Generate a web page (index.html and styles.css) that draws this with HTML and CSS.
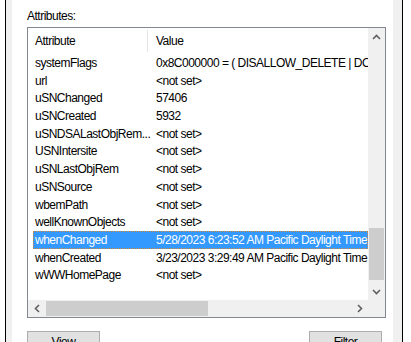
FILE: index.html
```html
<!DOCTYPE html>
<html lang="en">
<head>
    <meta charset="UTF-8">
    <title>Attribute Editor</title>
    <link rel="stylesheet" href="styles.css">
</head>
<body>
    <div class="frame">
        <div class="page">
            <div class="label">Attributes:</div>
            <div class="listbox">
                <div class="list-main">
                    <div class="list-view">
                        <div class="header">
                            <div class="col col-name">Attribute</div>
                            <div class="col col-value">Value</div>
                        </div>
                        <div class="row"><span class="col col-name">systemFlags</span><span class="col col-value">0x8C000000 = ( DISALLOW_DELETE | DOMAIN_DISALLOW_RENAME | DOMAIN_DISALLOW_MOVE )</span></div>
                        <div class="row"><span class="col col-name">url</span><span class="col col-value">&lt;not set&gt;</span></div>
                        <div class="row"><span class="col col-name">uSNChanged</span><span class="col col-value">57406</span></div>
                        <div class="row"><span class="col col-name">uSNCreated</span><span class="col col-value">5932</span></div>
                        <div class="row"><span class="col col-name">uSNDSALastObjRem...</span><span class="col col-value">&lt;not set&gt;</span></div>
                        <div class="row"><span class="col col-name">USNIntersite</span><span class="col col-value">&lt;not set&gt;</span></div>
                        <div class="row"><span class="col col-name">uSNLastObjRem</span><span class="col col-value">&lt;not set&gt;</span></div>
                        <div class="row"><span class="col col-name">uSNSource</span><span class="col col-value">&lt;not set&gt;</span></div>
                        <div class="row"><span class="col col-name">wbemPath</span><span class="col col-value">&lt;not set&gt;</span></div>
                        <div class="row"><span class="col col-name">wellKnownObjects</span><span class="col col-value">&lt;not set&gt;</span></div>
                        <div class="row selected"><span class="col col-name">whenChanged</span><span class="col col-value">5/28/2023 6:23:52 AM Pacific Daylight Time</span></div>
                        <div class="row"><span class="col col-name">whenCreated</span><span class="col col-value">3/23/2023 3:29:49 AM Pacific Daylight Time</span></div>
                        <div class="row"><span class="col col-name">wWWHomePage</span><span class="col col-value">&lt;not set&gt;</span></div>
                    </div>
                    <div class="vscroll">
                        <div class="arrow">
                            <svg width="9" height="6" viewBox="0 0 9 6"><path d="M1 5 L4.5 1.5 L8 5" fill="none" stroke="#606060" stroke-width="1.6"/></svg>
                        </div>
                        <div class="track">
                            <div class="vthumb"></div>
                        </div>
                        <div class="arrow">
                            <svg width="9" height="6" viewBox="0 0 9 6"><path d="M1 1 L4.5 4.5 L8 1" fill="none" stroke="#606060" stroke-width="1.6"/></svg>
                        </div>
                    </div>
                </div>
                <div class="list-bottom">
                    <div class="hscroll">
                        <div class="arrow">
                            <svg width="6" height="9" viewBox="0 0 6 9"><path d="M5 1 L1.5 4.5 L5 8" fill="none" stroke="#606060" stroke-width="1.6"/></svg>
                        </div>
                        <div class="htrack">
                            <div class="hthumb"></div>
                        </div>
                        <div class="arrow">
                            <svg width="6" height="9" viewBox="0 0 6 9"><path d="M1 1 L4.5 4.5 L1 8" fill="none" stroke="#606060" stroke-width="1.6"/></svg>
                        </div>
                    </div>
                    <div class="corner"></div>
                </div>
            </div>
            <div class="buttons">
                <div class="button">View</div>
                <div class="button">Filter</div>
            </div>
        </div>
    </div>
</body>
</html>
```

FILE: styles.css
```css
body {
    margin: 0;
    background-color: #ffffff;
    font-family: "Liberation Sans", Arial, sans-serif;
    font-size: 12px;
    letter-spacing: -0.5px;
    color: #000000;
    overflow: hidden;
}
.frame {
    margin-left: 5px;
    width: 398px;
    height: 342px;
    border-left: 1px solid #000000;
    border-right: 1px solid #000000;
    background-color: #f0f0f0;
    padding: 0 9px 0 6px;
    box-sizing: border-box;
}
.page {
    background-color: #ffffff;
    height: 100%;
    padding: 9px 0 0 15px;
    box-sizing: border-box;
}
.label {
    height: 18px;
    line-height: 15px;
}
.listbox {
    width: 357px;
    border: 1px solid #828790;
}
.list-main {
    display: flex;
    height: 272px;
}
.list-view {
    flex: 1;
    min-width: 0;
    overflow: hidden;
    white-space: nowrap;
}
.header {
    display: flex;
    height: 26px;
    align-items: center;
}
.header .col-name {
    border-right: 1px solid #e5e5e5;
    height: 22px;
    line-height: 22px;
}
.col {
    display: inline-block;
    flex-shrink: 0;
    padding-left: 7px;
    box-sizing: border-box;
}
.col-name {
    width: 120px;
}
.col-value {
    padding-left: 8px;
}
.row {
    height: 17.7px;
    line-height: 18.5px;
    display: flex;
}
.row.selected {
    background-color: #3399ff;
    color: #ffffff;
    outline: 1px dotted #d08840;
    outline-offset: -1px;
    margin-left: 5px;
}
.row.selected .col-name {
    width: 115px;
    padding-left: 2px;
}
.vscroll {
    width: 17px;
    flex-shrink: 0;
    background-color: #f0f0f0;
    display: flex;
    flex-direction: column;
}
.arrow {
    height: 17px;
    display: flex;
    align-items: center;
    justify-content: center;
}
.track {
    flex: 1;
    position: relative;
}
.vthumb {
    position: absolute;
    left: 1px;
    right: 1px;
    top: 183px;
    height: 52px;
    background-color: #cdcdcd;
}
.list-bottom {
    display: flex;
    height: 17px;
}
.hscroll {
    flex: 1;
    display: flex;
    background-color: #f0f0f0;
}
.hscroll .arrow {
    width: 17px;
}
.htrack {
    flex: 1;
    position: relative;
}
.hthumb {
    position: absolute;
    top: 1px;
    bottom: 1px;
    left: 1px;
    width: 162px;
    background-color: #cdcdcd;
}
.corner {
    width: 17px;
    background-color: #f0f0f0;
}
.buttons {
    display: flex;
    justify-content: space-between;
    width: 355px;
    margin-top: 13px;
}
.button {
    width: 71px;
    height: 21px;
    border: 1px solid #adadad;
    background-color: #e1e1e1;
    text-align: center;
    line-height: 21px;
}
```
